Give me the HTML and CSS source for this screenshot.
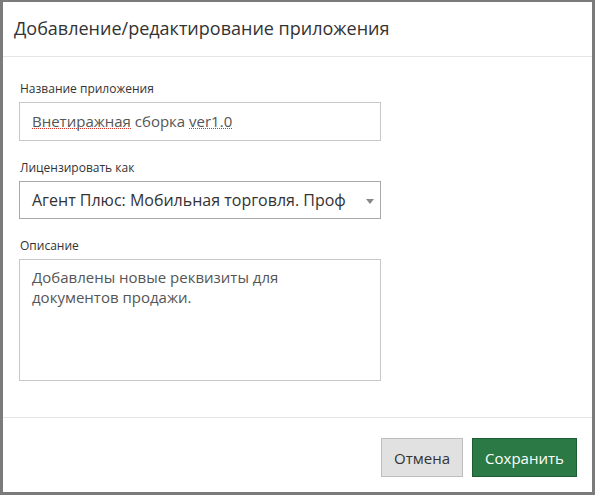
FILE: index.html
```html
<!DOCTYPE html>
<html lang="ru">
<head>
<meta charset="utf-8">
<title>Добавление/редактирование приложения</title>
<link rel="stylesheet" href="styles.css">
</head>
<body>
<div class="frame">
  <div class="header">
    <h1 class="title">Добавление/редактирование приложения</h1>
  </div>
  <div class="content">
    <div class="group">
      <div class="label">Название приложения</div>
      <div class="control input"><span class="spell">Внетиражная</span> сборка <span class="spell">ver1.0</span></div>
    </div>
    <div class="group">
      <div class="label">Лицензировать как</div>
      <div class="control select">
        <span class="select-text">Агент Плюс: Мобильная торговля. Проф</span>
        <span class="caret"></span>
      </div>
    </div>
    <div class="group">
      <div class="label">Описание</div>
      <div class="control textarea">Добавлены новые реквизиты для<br>документов продажи.</div>
    </div>
  </div>
  <div class="footer">
    <button class="btn btn-cancel">Отмена</button>
    <button class="btn btn-save">Сохранить</button>
  </div>
</div>
</body>
</html>
```
FILE: styles.css
```css
* { box-sizing: border-box; }
html, body { margin: 0; padding: 0; }
body {
  width: 595px;
  height: 495px;
  font-family: "Open Sans", "Noto Sans", sans-serif;
  color: #333;
  background: #7b7b7b;
}
.frame {
  width: 595px;
  height: 495px;
  border-style: solid;
  border-color: #7b7b7b;
  border-width: 2px 3px 3px 3px;
  background: #fff;
  display: flex;
  flex-direction: column;
}
.header {
  height: 55px;
  flex: none;
  border-bottom: 1px solid #e5e5e5;
  padding: 0 11px;
  display: flex;
  align-items: center;
}
.title {
  margin: 0;
  font-size: 18px;
  font-weight: 400;
  line-height: 24px;
  color: #333;
  padding-bottom: 2px;
}
.content {
  flex: none;
  padding: 23px 16px 0 16px;
  height: 361px;
  border-bottom: 1px solid #e5e5e5;
}
.group { margin-bottom: 18px; }
.label {
  font-size: 12px;
  line-height: 17px;
  color: #333;
  margin-bottom: 5px;
  padding-left: 1px;
}
.control {
  width: 362px;
  border: 1px solid #c8c8c8;
  background: #fff;
  font-size: 15px;
  color: #555;
  padding: 0 12px;
}
.input {
  height: 39px;
  line-height: 37px;
}
.spell {
  background-image: repeating-linear-gradient(to right, #e0302a 0, #e0302a 1px, transparent 1px, transparent 2px);
  background-repeat: no-repeat;
  background-size: 100% 1px;
  background-position: 0 calc(100% - 2px);
}
.select {
  height: 38px;
  display: flex;
  align-items: center;
  justify-content: space-between;
  color: #333;
  font-size: 16px;
  border-color: #a9a9a9;
  padding-right: 6px;
}
.caret {
  width: 0;
  height: 0;
  border-left: 4px solid transparent;
  border-right: 4px solid transparent;
  border-top: 5px solid #888;
  margin-top: 2px;
}
.textarea {
  height: 122px;
  line-height: 20px;
  padding-top: 7px;
}
.footer {
  flex: 1;
  display: flex;
  justify-content: flex-end;
  align-items: flex-start;
  padding: 20px 15px 0 0;
  gap: 9px;
}
.btn {
  font-family: "Open Sans", "Noto Sans", sans-serif;
  font-size: 15px;
  height: 39px;
  padding: 0 10px;
  border-radius: 0;
  cursor: pointer;
}
.btn-cancel {
  width: 82px;
  background: #e1e1e1;
  border: 1px solid #bdbdbd;
  color: #333;
}
.btn-save {
  width: 105px;
  background: #2b7a45;
  border: 1px solid #1e5c33;
  color: #fff;
}
```
